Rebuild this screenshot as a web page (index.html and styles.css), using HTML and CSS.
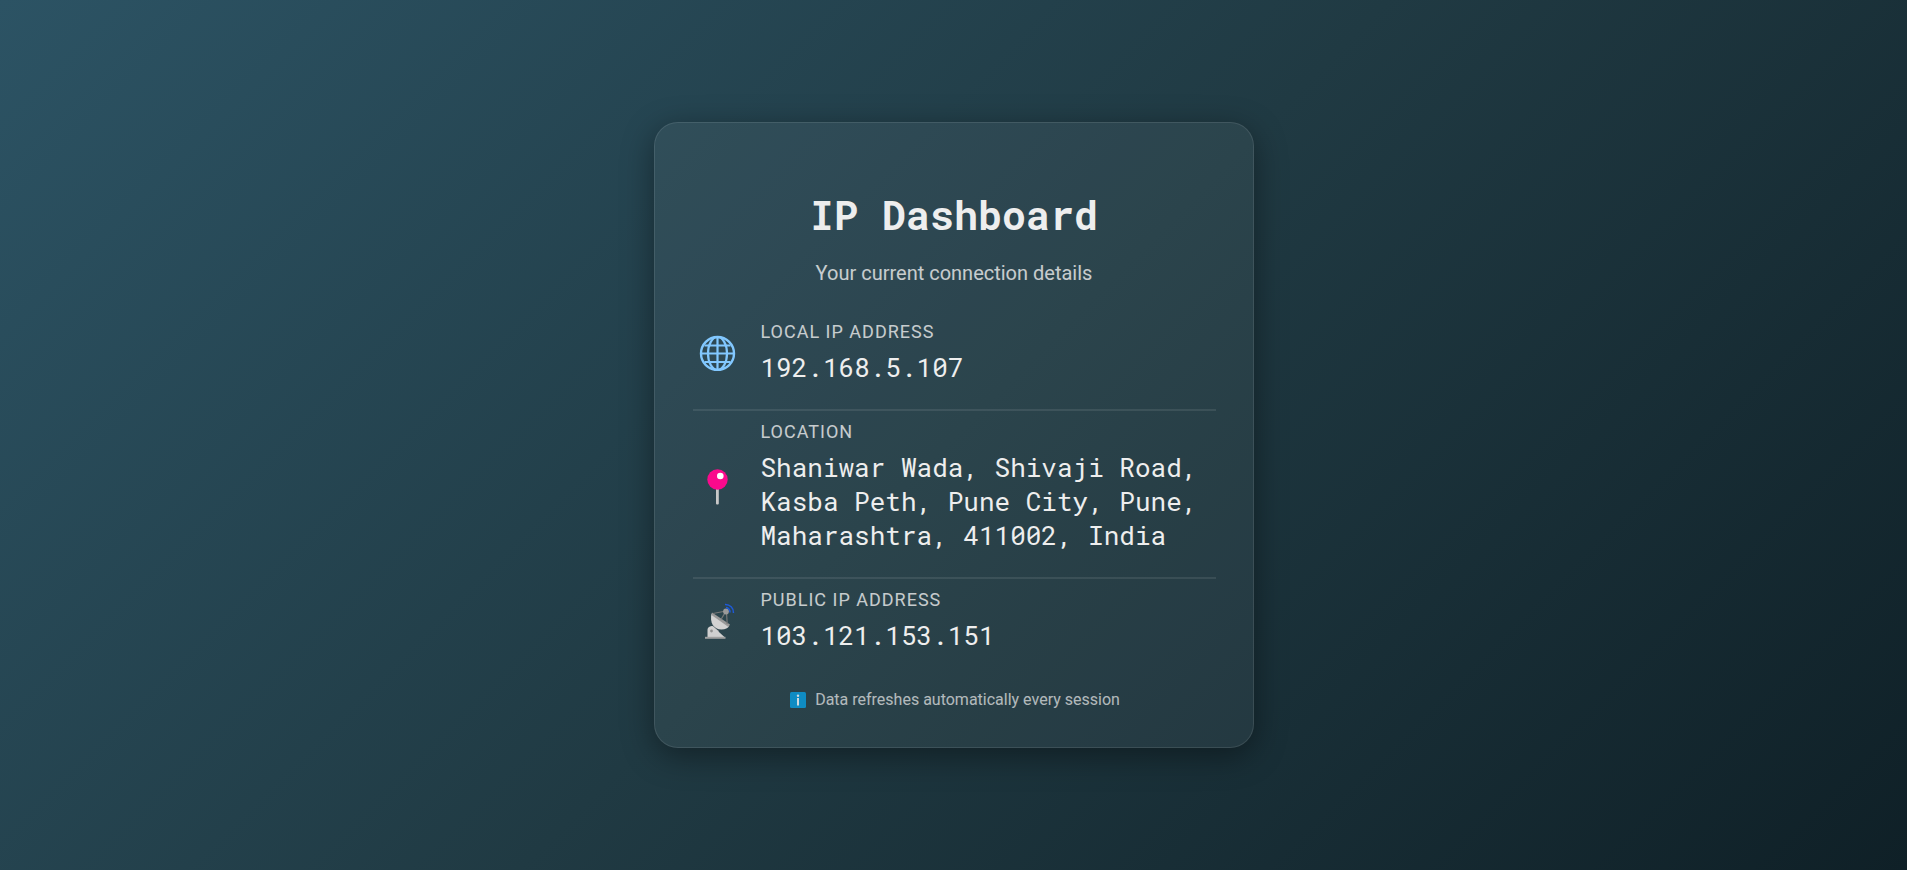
FILE: index.html
```
<!DOCTYPE html>
<html lang="en">
<head>
<meta charset="utf-8">
<meta name="viewport" content="width=device-width, initial-scale=1">
<title>IP Dashboard</title>
<link rel="stylesheet" href="styles.css">
</head>
<body>
<main class="card">
  <h1 class="title">IP Dashboard</h1>
  <p class="subtitle">Your current connection details</p>
  <dl class="rows">
    <div class="row">
      <svg class="icon" viewBox="0 0 36 36" aria-hidden="true">
        <g fill="none" stroke="#82c8ff" stroke-width="2.200">
          <circle cx="18.500" cy="18.500" r="16.500" stroke-width="2.400"/>
          <ellipse cx="18.500" cy="18.500" rx="9.500" ry="16.500"/>
          <path d="M18.500 1.500v34M2 18.500h33M5.500 10.500h26M5.500 27h26"/>
        </g>
      </svg>
      <div class="detail">
        <dt class="label">Local IP Address</dt>
        <dd class="value">192.168.5.107</dd>
      </div>
    </div>
    <div class="row">
      <svg class="icon" viewBox="0 0 36 36" aria-hidden="true">
        <rect x="17" y="18" width="2.800" height="17.500" rx="1" fill="#c8c8c8"/>
        <circle cx="18.500" cy="10.500" r="10.200" fill="#fa0a8c"/>
        <circle cx="21.300" cy="7" r="3.300" fill="#fff"/>
      </svg>
      <div class="detail">
        <dt class="label">Location</dt>
        <dd class="value">Shaniwar Wada, Shivaji Road, Kasba Peth, Pune City, Pune, Maharashtra, 411002, India</dd>
      </div>
    </div>
    <div class="row">
      <svg class="icon" viewBox="0 0 36 36" aria-hidden="true">
        <path d="M13 23l7 5-3 4-6-5z" fill="#a0a0a0"/>
        <path d="M8.500 34.500v-7a4 4 0 0 1 7-3l5 5 5.500 5z" fill="#d0d0d0"/>
        <circle cx="12.500" cy="28" r="1.400" fill="#909090"/>
        <path d="M6 33.800h20.500v2H6z" fill="#a0a0a0"/>
        <path d="M12.500 10.500c-2 9 2 16 10 16 4 0 6.500-1.500 7.500-3.500z" fill="#d2d2d2"/>
        <path d="M13 9.500l18 12-1.500 2.500L12.500 12z" fill="#999"/>
        <path d="M14 10.500l13-2.500-5 8.500M27.500 9l.7 12" fill="none" stroke="#777" stroke-width="1.200"/>
        <circle cx="27" cy="8.500" r="2.900" fill="#9a9a9a"/>
        <path d="M27 4.500a4.500 4.500 0 0 1 4 5M26 1.500a8 8 0 0 1 8.500 8.500" fill="none" stroke="#1e5ad8" stroke-width="1.500"/>
      </svg>
      <div class="detail">
        <dt class="label">Public IP Address</dt>
        <dd class="value">103.121.153.151</dd>
      </div>
    </div>
  </dl>
  <p class="footer">
    <svg class="info" viewBox="0 0 16 16" aria-hidden="true">
      <rect width="16" height="16" rx="1.500" fill="#0f8cc3"/>
      <circle cx="8" cy="3.700" r="1.200" fill="#cfdadf"/>
      <path d="M7 6h2v7.500H7z" fill="#cfdadf"/>
    </svg>
    <span class="note">Data refreshes automatically every session</span>
  </p>
</main>
</body>
</html>
```
FILE: styles.css
```
* {
  box-sizing: border-box;
}

body {
  display: flex;
  align-items: center;
  justify-content: center;
  min-height: 100vh;
  margin: 0;
  background: linear-gradient(135deg, #2c5364, #203a43, #0f2027);
  color: #eee;
  font-family: Roboto, "Open Sans", sans-serif;
}

.card {
  width: 100%;
  max-width: 600px;
  padding: 65px 37px 38px 38px;
  border: 1px solid rgba(255, 255, 255, 0.1);
  border-radius: 24px;
  background: rgba(255, 255, 255, 0.05);
  box-shadow: 0 8px 32px rgba(0, 0, 0, 0.4);
}

.title {
  margin: 0;
  font-family: "Roboto Mono", "Liberation Mono", monospace;
  font-size: 40px;
  line-height: 54px;
  text-align: center;
}

.subtitle {
  margin: 19px 0 36px;
  font-size: 20px;
  line-height: 24px;
  text-align: center;
  opacity: 0.8;
}

.rows {
  margin: 0;
}

.row {
  display: flex;
  align-items: center;
  gap: 20px;
  padding: 10px 0 25px;
  border-bottom: 2px solid rgba(255, 255, 255, 0.09);
}

.row:first-child {
  padding-top: 0;
}

.row:last-child {
  border-bottom: 0;
}

.icon {
  flex: none;
  width: 48px;
  height: 36px;
}

.detail {
  flex: 1;
}

.label {
  margin-bottom: 8px;
  font-size: 18px;
  line-height: 21px;
  letter-spacing: 1px;
  text-transform: uppercase;
  opacity: 0.8;
}

.value {
  margin: 0;
  font-family: "Roboto Mono", "Liberation Mono", monospace;
  font-size: 26px;
  line-height: 34px;
}

.footer {
  display: flex;
  align-items: center;
  justify-content: center;
  gap: 9px;
  margin: 13px 0 0;
  padding-left: 2px;
  font-size: 16px;
  line-height: 19px;
}

.info {
  width: 16px;
  height: 16px;
}

.note {
  opacity: 0.7;
}
```
